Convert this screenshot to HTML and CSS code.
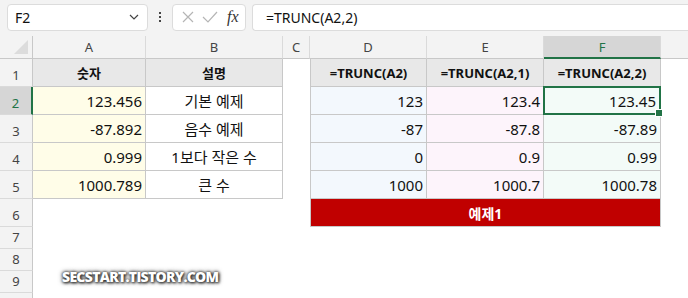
FILE: index.html
```html
<!DOCTYPE html>
<html lang="ko">
<head>
    <meta charset="UTF-8">
    <title>TRUNC 예제</title>
    <link rel="stylesheet" href="styles.css">
</head>
<body>
    <div class="formula-bar">
        <div class="name-box">
            <span>F2</span>
            <svg class="chevron" width="10" height="6" viewBox="0 0 10 6"><path d="M1 1 L5 5 L9 1" fill="none" stroke="#444" stroke-width="1.2"/></svg>
        </div>
        <div class="dots"><i></i><i></i><i></i></div>
        <div class="fx-box">
            <svg width="14" height="14" viewBox="0 0 14 14"><path d="M2 2 L12 12 M12 2 L2 12" stroke="#b5b5b5" stroke-width="1.2"/></svg>
            <svg width="16" height="14" viewBox="0 0 16 14"><path d="M1 7 L6 12 L15 2" fill="none" stroke="#b5b5b5" stroke-width="1.2"/></svg>
            <span class="fx">fx</span>
        </div>
        <div class="formula">=TRUNC(A2,2)</div>
    </div>

    <div class="sheet">
        <div class="corner"><span class="tri"></span></div>
        <div class="col-head">A</div>
        <div class="col-head">B</div>
        <div class="col-head">C</div>
        <div class="col-head">D</div>
        <div class="col-head">E</div>
        <div class="col-head active">F</div>
        <div class="col-head blank"></div>

        <div class="row-head">1</div>
        <div class="cell head">숫자</div>
        <div class="cell head">설명</div>
        <div class="cell empty"></div>
        <div class="cell head first">=TRUNC(A2)</div>
        <div class="cell head">=TRUNC(A2,1)</div>
        <div class="cell head">=TRUNC(A2,2)</div>
        <div class="cell empty"></div>

        <div class="row-head active">2</div>
        <div class="cell num yellow">123.456</div>
        <div class="cell text">기본 예제</div>
        <div class="cell empty"></div>
        <div class="cell num blue first">123</div>
        <div class="cell num pink">123.4</div>
        <div class="cell num mint selected">123.45</div>
        <div class="cell empty"></div>

        <div class="row-head">3</div>
        <div class="cell num yellow">-87.892</div>
        <div class="cell text">음수 예제</div>
        <div class="cell empty"></div>
        <div class="cell num blue first">-87</div>
        <div class="cell num pink">-87.8</div>
        <div class="cell num mint">-87.89</div>
        <div class="cell empty"></div>

        <div class="row-head">4</div>
        <div class="cell num yellow">0.999</div>
        <div class="cell text">1보다 작은 수</div>
        <div class="cell empty"></div>
        <div class="cell num blue first">0</div>
        <div class="cell num pink">0.9</div>
        <div class="cell num mint">0.99</div>
        <div class="cell empty"></div>

        <div class="row-head">5</div>
        <div class="cell num yellow">1000.789</div>
        <div class="cell text">큰 수</div>
        <div class="cell empty"></div>
        <div class="cell num blue first">1000</div>
        <div class="cell num pink">1000.7</div>
        <div class="cell num mint">1000.78</div>
        <div class="cell empty"></div>

        <div class="row-head">6</div>
        <div class="cell empty"></div>
        <div class="cell empty"></div>
        <div class="cell empty"></div>
        <div class="cell banner">예제1</div>
        <div class="cell empty"></div>

        <div class="row-head">7</div>
        <div class="cell empty wide"></div>
        <div class="row-head">8</div>
        <div class="cell empty wide"></div>
        <div class="row-head">9</div>
        <div class="cell empty wide"></div>
        <div class="row-head"></div>
        <div class="cell empty wide"></div>
    </div>

    <div class="watermark">SECSTART.TISTORY.COM</div>
</body>
</html>
```

FILE: styles.css
```css
* {
    box-sizing: border-box;
}

body {
    margin: 0;
    width: 688px;
    height: 298px;
    overflow: hidden;
    background: #ffffff;
    font-family: "Noto Sans", "Noto Sans CJK KR", sans-serif;
    color: #111;
    position: relative;
}

.formula-bar {
    height: 36px;
    background: #f3f3f3;
    display: flex;
    align-items: center;
    padding: 0 0 2px 7px;
    column-gap: 6px;
}

.name-box {
    width: 141px;
    height: 27px;
    background: #fff;
    border: 1px solid #dcdcdc;
    border-radius: 4px;
    display: flex;
    align-items: center;
    justify-content: space-between;
    padding: 0 8px 0 7px;
    font-size: 14px;
}

.dots {
    width: 12px;
    display: flex;
    flex-direction: column;
    align-items: center;
    row-gap: 2px;
}

.dots i {
    width: 2px;
    height: 2px;
    background: #444;
}

.fx-box {
    width: 74px;
    height: 27px;
    background: #fff;
    border: 1px solid #dcdcdc;
    border-radius: 4px;
    display: flex;
    align-items: center;
    padding: 0 4px 0 8px;
    column-gap: 7px;
}

.fx {
    font-family: "Liberation Serif", serif;
    font-style: italic;
    font-size: 16px;
    color: #333;
    margin-left: 2px;
}

.formula {
    flex: 1;
    height: 27px;
    background: #fff;
    border: 1px solid #dcdcdc;
    border-right: none;
    border-radius: 4px 0 0 4px;
    display: flex;
    align-items: center;
    padding-left: 13px;
    font-size: 14px;
}

.sheet {
    display: grid;
    grid-template-columns: 33px 113px 137px 27px 117px 117px 117px 1fr;
    grid-template-rows: 23px repeat(6, 28px) repeat(3, 22px) 10px;
}

.corner {
    background: #f3f3f3;
    border-right: 1px solid #c8c8c8;
    border-bottom: 1px solid #c8c8c8;
    position: relative;
}

.tri {
    position: absolute;
    right: 4px;
    bottom: 4px;
    width: 0;
    height: 0;
    border-left: 14px solid transparent;
    border-bottom: 14px solid #dcdcdc;
}

.col-head {
    background: #f3f3f3;
    border-right: 1px solid #dadada;
    border-bottom: 1px solid #c8c8c8;
    font-size: 13px;
    color: #444;
    display: flex;
    align-items: center;
    justify-content: center;
}

.col-head.active {
    background: #d6d6d6;
    color: #217346;
    border-bottom: 2px solid #217346;
}

.col-head.blank {
    border-right: none;
}

.row-head {
    background: #f3f3f3;
    border-right: 1px solid #c8c8c8;
    border-bottom: 1px solid #dadada;
    font-size: 13px;
    color: #444;
    display: flex;
    align-items: flex-end;
    justify-content: center;
    padding-bottom: 2px;
}

.row-head.active {
    background: #d6d6d6;
    color: #217346;
    border-right: 2px solid #217346;
}

.cell {
    border-right: 1px solid #c8c8c8;
    border-bottom: 1px solid #c8c8c8;
    display: flex;
    align-items: center;
    font-size: 15px;
    white-space: nowrap;
}

.cell.first {
    border-left: 1px solid #c8c8c8;
}

.cell.head {
    background: #e8e8e8;
    justify-content: center;
    font-weight: bold;
    font-size: 13px;
}

.cell.num {
    justify-content: flex-end;
    padding-right: 3px;
}

.cell.text {
    justify-content: center;
}

.yellow { background: #fffde8; }
.blue { background: #f3f8fd; }
.pink { background: #fdf4fb; }
.mint { background: #f3fbf8; }

.cell.selected {
    border: 2px solid #217346;
    margin: -1px 0 0 -1px;
    position: relative;
}

.cell.selected::after {
    content: "";
    position: absolute;
    right: -4px;
    bottom: -4px;
    width: 6px;
    height: 6px;
    background: #217346;
    border: 1px solid #fff;
}

.cell.empty {
    border: none;
}

.cell.wide {
    grid-column: span 7;
}

.cell.banner {
    grid-column: span 3;
    background: #c00000;
    color: #fff;
    font-weight: bold;
    font-size: 14px;
    justify-content: center;
    border-left: 1px solid #c8c8c8;
}

.watermark {
    position: absolute;
    left: 62px;
    top: 267px;
    color: #fff;
    font-family: "Open Sans", "Noto Sans", sans-serif;
    font-weight: 800;
    font-size: 14px;
    letter-spacing: -0.7px;
    text-shadow: 0 0 3px #333, 1px 1px 3px #222, 0 0 5px #555;
}
```
